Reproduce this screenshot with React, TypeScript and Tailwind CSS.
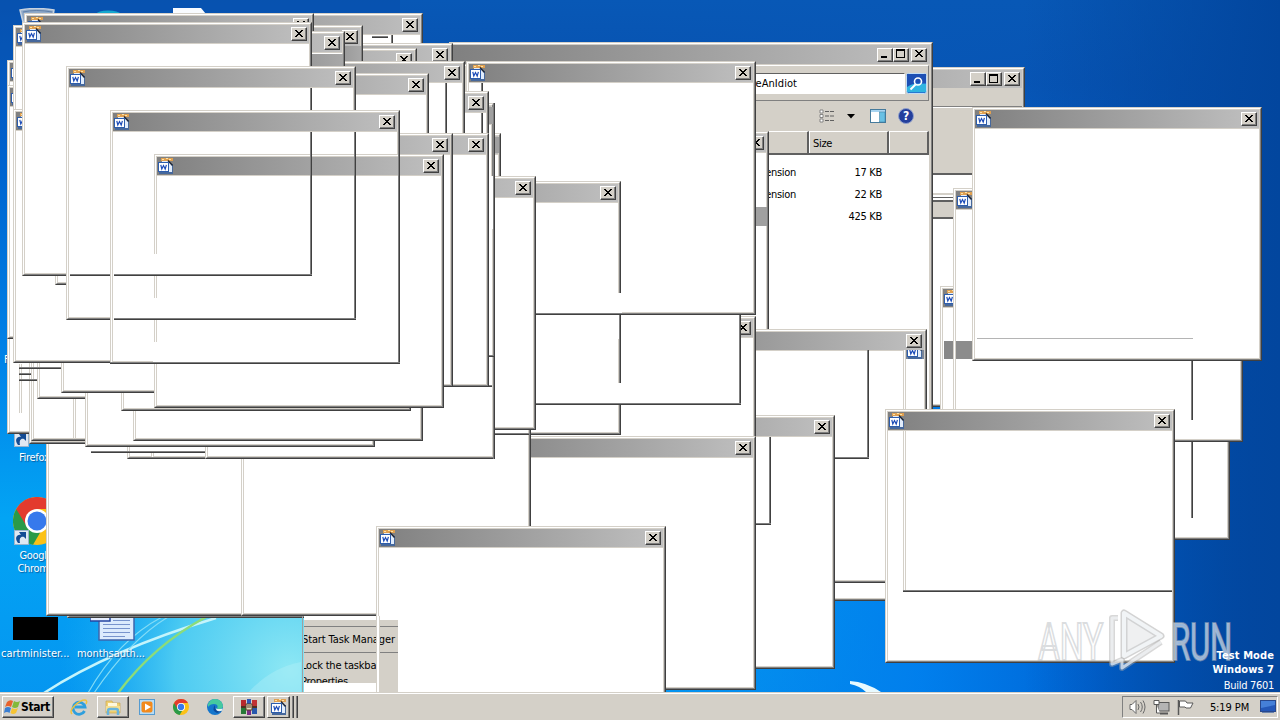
import type { ReactNode } from 'react';

interface Point {
  x: number;
  y: number;
}

type TraceKind = 'right' | 'bottom' | 'left' | 'top' | 'blank' | 'bar' | 'face';

interface TraceItem extends Point {
  kind: TraceKind;
  size: number;
  h?: number;
}

const POPUPS_BACK: Point[] = [
  { x: 940, y: 286 },
  { x: 953, y: 188 },
];

const POPUPS_RIGHT: Point[] = [
  { x: 972, y: 107 },
  { x: 479, y: 131 },
  { x: 637, y: 329 },
  { x: 545, y: 415 },
  { x: 885, y: 409 },
  { x: 466, y: 316 },
  { x: 466, y: 436 },
  { x: 466, y: 61 },
  { x: 331, y: 181 },
  { x: 67, y: 364 },
  { x: 46, y: 362 },
  { x: 241, y: 362 },
];

const POPUPS_LEFT: Point[] = [
  { x: 133, y: 13 },
  { x: 163, y: 43 },
  { x: 127, y: 48 },
  { x: 73, y: 25 },
  { x: 211, y: 133 },
  { x: 204, y: 103 },
  { x: 246, y: 176 },
  { x: 127, y: 205 },
  { x: 205, y: 205 },
  { x: 199, y: 91 },
  { x: 175, y: 61 },
  { x: 139, y: 73 },
  { x: 199, y: 133 },
  { x: 163, y: 133 },
  { x: 7, y: 60 },
  { x: 7, y: 180 },
  { x: 29, y: 190 },
  { x: 31, y: 187 },
  { x: 37, y: 145 },
  { x: 85, y: 193 },
  { x: 133, y: 187 },
  { x: 121, y: 157 },
  { x: 61, y: 139 },
  { x: 7, y: 85 },
  { x: 13, y: 25 },
  { x: 13, y: 109 },
  { x: 24, y: 13 },
  { x: 55, y: 31 },
  { x: 22, y: 22 },
  { x: 66, y: 66 },
  { x: 110, y: 110 },
  { x: 154, y: 154 },
];

// Edges left behind by windows that never repainted
const TRACES_RIGHT: TraceItem[] = [
  { kind: 'blank', x: 618, y: 293, size: 4, h: 20 },
  { kind: 'bottom', x: 534, y: 313, size: 220 },
  { kind: 'blank', x: 500, y: 315, size: 239, h: 24 },
  { kind: 'right', x: 619, y: 315, size: 68 },
  { kind: 'right', x: 739, y: 315, size: 90 },
  { kind: 'blank', x: 618, y: 383, size: 4, h: 20 },
  { kind: 'bottom', x: 534, y: 403, size: 207 },
  { kind: 'right', x: 867, y: 350, size: 109 },
  { kind: 'bottom', x: 835, y: 457, size: 34 },
  { kind: 'right', x: 769, y: 437, size: 88 },
  { kind: 'bottom', x: 756, y: 523, size: 15 },
  { kind: 'bar', x: 756, y: 207, size: 11, h: 19 },
  { kind: 'left', x: 903, y: 350, size: 59 },
  { kind: 'left', x: 903, y: 431, size: 160 },
  { kind: 'bottom', x: 903, y: 590, size: 269 },
  { kind: 'top', x: 977, y: 338, size: 216 },
  { kind: 'right', x: 1191, y: 361, size: 59 },
  { kind: 'right', x: 1191, y: 442, size: 76 },
];

const TRACES_LEFT: TraceItem[] = [
  { kind: 'face', x: 312, y: 54, size: 31, h: 12 },
  { kind: 'face', x: 345, y: 46, size: 16, h: 15 },
  { kind: 'blank', x: 489, y: 176, size: 4, h: 53 },
  { kind: 'bar', x: 489, y: 107, size: 4, h: 17 },
  { kind: 'bar', x: 495, y: 137, size: 4, h: 16 },
  { kind: 'right', x: 493, y: 103, size: 356 },
  { kind: 'right', x: 310, y: 88, size: 22 },
  { kind: 'right', x: 310, y: 132, size: 144 },
  { kind: 'bottom', x: 70, y: 274, size: 40 },
  { kind: 'bottom', x: 114, y: 274, size: 198 },
  { kind: 'right', x: 354, y: 132, size: 188 },
  { kind: 'bottom', x: 114, y: 318, size: 242 },
  { kind: 'right', x: 398, y: 154, size: 210 },
  { kind: 'bottom', x: 110, y: 362, size: 290 },
  { kind: 'blank', x: 153, y: 254, size: 5, h: 20 },
  { kind: 'blank', x: 153, y: 298, size: 5, h: 20 },
  { kind: 'blank', x: 153, y: 342, size: 5, h: 20 },
  { kind: 'right', x: 445, y: 83, size: 50 },
  { kind: 'right', x: 481, y: 83, size: 8 },
  { kind: 'right', x: 481, y: 113, size: 20 },
  { kind: 'bottom', x: 372, y: 36, size: 16 },
  { kind: 'right', x: 391, y: 35, size: 8 },
  { kind: 'bottom', x: 489, y: 355, size: 5 },
  { kind: 'bottom', x: 489, y: 385, size: 3 },
  { kind: 'bottom', x: 495, y: 433, size: 34 },
  { kind: 'left', x: 73, y: 399, size: 39 },
  { kind: 'left', x: 19, y: 364, size: 49 },
  { kind: 'bottom', x: 19, y: 367, size: 42 },
  { kind: 'bottom', x: 19, y: 373, size: 12 },
  { kind: 'bottom', x: 19, y: 379, size: 18 },
  { kind: 'bottom', x: 91, y: 451, size: 114 },
  { kind: 'left', x: 151, y: 453, size: 4 },
];

function WordIcon() {
  return (
    <svg width="16" height="16" viewBox="0 0 16 16" className="shrink-0">
      <path d="M3 6h12v10H1v-3z" fill="#46689c" />
      <path d="M3 0h12v3H3z" fill="#e0a050" />
      <path d="M4 1.500h2M8 0.500h2M11 1.500h2" stroke="#fbe3a8" />
      <path d="M4 3h7l3 4v7H4z" fill="#e2edfc" />
      <path d="M10 2.500l4.500 5" stroke="#1c2434" strokeWidth="1.400" />
      <rect x="0.500" y="4.500" width="10" height="9" fill="#fff" stroke="#2d5dac" />
      <path d="M2.800 6.800l1 4.200 1.700-3.500 1.700 3.500 1.200-4.200" fill="none" stroke="#1b4bb8" strokeWidth="1.200" />
    </svg>
  );
}

function CaptionButton({ children }: { children: ReactNode }) {
  return (
    <span className="block h-[14px] w-[16px] shrink-0 border border-t-white border-l-white border-r-[#404040] border-b-[#404040] bg-[#d4d0c8]">
      <span className="flex h-full w-full items-center justify-center border-r border-b border-[#808080]">
        <svg width="12" height="10" viewBox="0 0 12 10" shapeRendering="crispEdges">{children}</svg>
      </span>
    </span>
  );
}

function CloseButton() {
  return (
    <CaptionButton>
      <path
        d="M2 1h2v1H2zM8 1h2v1H8zM3 2h2v1H3zM7 2h2v1H7zM4 3h4v1H4zM5 4h2v1H5zM4 5h4v1H4zM3 6h2v1H3zM7 6h2v1H7zM2 7h2v1H2zM8 7h2v1H8z"
        fill="#000"
      />
    </CaptionButton>
  );
}

function WindowControls() {
  return (
    <span className="flex">
      <CaptionButton><path d="M2 7h6v2H2z" fill="#000" /></CaptionButton>
      <CaptionButton><path d="M1 0h9v9H1zM2 2v6h7V2z" fillRule="evenodd" fill="#000" /></CaptionButton>
      <span className="w-[2px]" />
      <CloseButton />
    </span>
  );
}

function Frame({ children }: { children: ReactNode }) {
  return (
    <div className="h-full w-full border border-t-[#d4d0c8] border-l-[#d4d0c8] border-r-[#404040] border-b-[#404040]">
      <div className="flex h-full w-full flex-col border border-t-white border-l-white border-r-[#808080] border-b-[#808080] bg-[#d4d0c8] p-px">
        {children}
      </div>
    </div>
  );
}

function Popup({ x, y }: Point) {
  return (
    <div className="absolute h-[254px] w-[290px]" style={{ left: x, top: y }}>
      <Frame>
        <div className="flex h-[18px] shrink-0 items-center justify-between bg-gradient-to-r from-[#808080] to-[#c0c0c0] pr-[2px] pl-px">
          <WordIcon />
          <CloseButton />
        </div>
        <div className="mt-px flex-1 bg-white" />
      </Frame>
    </div>
  );
}

function Trace({ kind, x, y, size, h }: TraceItem) {
  const pos = { left: x, top: y };
  if (kind === 'right') {
    return <div className="absolute w-[2px] border-r border-[#404040] bg-[#808080]" style={{ ...pos, height: size }} />;
  }
  if (kind === 'bottom') {
    return <div className="absolute h-[2px] border-b border-[#404040] bg-[#808080]" style={{ ...pos, width: size }} />;
  }
  if (kind === 'left') {
    return <div className="absolute w-[3px] border-x border-[#d4d0c8] bg-white" style={{ ...pos, height: size }} />;
  }
  if (kind === 'top') {
    return <div className="absolute h-px bg-[#b4b4b4]" style={{ ...pos, width: size }} />;
  }
  if (kind === 'bar') {
    return <div className="absolute bg-[#a0a0a0]" style={{ ...pos, width: size, height: h }} />;
  }
  if (kind === 'face') {
    return <div className="absolute bg-gradient-to-r from-[#9c9c9c] to-[#a8a8a8]" style={{ ...pos, width: size, height: h }} />;
  }
  return <div className="absolute bg-white" style={{ ...pos, width: size, height: h }} />;
}

function ChromeIcon({ size }: { size: number }) {
  return (
    <svg width={size} height={size} viewBox="0 0 48 48">
      <circle cx="24" cy="24" r="24" fill="#fbc116" />
      <path d="M24 24L3.200 12A24 24 0 0 0 20 47.700L31 29z" fill="#2a9a48" />
      <path d="M3.200 12A24 24 0 0 1 44.800 12H24L14 30z" fill="#e33b2e" />
      <circle cx="24" cy="24" r="12" fill="#fff" />
      <circle cx="24" cy="24" r="9.500" fill="#3779ec" />
    </svg>
  );
}

function ShortcutArrow() {
  return (
    <svg width="15" height="15" viewBox="0 0 15 15">
      <rect x="0.500" y="0.500" width="14" height="14" fill="#dfe8f2" stroke="#9ab4cc" />
      <path d="M4 13C0 8 3 4 7 5L5 2h7v7l-2-2c-3-1-5 1-4 6z" fill="#134b94" />
    </svg>
  );
}

function Wallpaper() {
  return (
    <svg className="absolute inset-0" width="1280" height="720" viewBox="0 0 1280 720">
      <defs>
        <linearGradient id="sky" x1="0" y1="0" x2="0" y2="1">
          <stop offset="0" stopColor="#0850ae" />
          <stop offset="0.200" stopColor="#0060cc" />
          <stop offset="0.500" stopColor="#0083e8" />
          <stop offset="0.720" stopColor="#03a4f4" />
          <stop offset="1" stopColor="#0594f0" />
        </linearGradient>
        <linearGradient id="shade" x1="0" y1="0" x2="1" y2="0">
          <stop offset="0.500" stopColor="#0078e8" stopOpacity="0" />
          <stop offset="0.720" stopColor="#007cec" stopOpacity="0.900" />
          <stop offset="0.850" stopColor="#0066d6" />
          <stop offset="0.930" stopColor="#0058be" />
          <stop offset="1" stopColor="#024ca6" />
        </linearGradient>
        <linearGradient id="top" x1="0" y1="0" x2="0" y2="1">
          <stop offset="0" stopColor="#0858b6" />
          <stop offset="0.200" stopColor="#0852b0" stopOpacity="0.900" />
          <stop offset="1" stopColor="#0650ae" stopOpacity="0" />
        </linearGradient>
        <linearGradient id="corner" x1="0" y1="0" x2="1" y2="0">
          <stop offset="0.800" stopColor="#02469e" stopOpacity="0" />
          <stop offset="1" stopColor="#02469e" />
        </linearGradient>
        <radialGradient id="glow" cx="290" cy="670" r="230" gradientUnits="userSpaceOnUse">
          <stop offset="0" stopColor="#8ee8f4" />
          <stop offset="0.500" stopColor="#5ad4f2" stopOpacity="0.850" />
          <stop offset="1" stopColor="#20b4f4" stopOpacity="0" />
        </radialGradient>
      </defs>
      <rect width="1280" height="720" fill="url(#sky)" />
      <rect width="1280" height="720" fill="url(#shade)" />
      <rect x="400" width="880" height="420" fill="url(#top)" />
      <rect width="400" height="60" fill="#0855b2" opacity="0.400" />
      <rect width="1280" height="720" fill="url(#corner)" />
      <rect y="400" width="700" height="320" fill="url(#glow)" />
      <path d="M44 693Q110 650 216 618" stroke="#c4f4fb" strokeWidth="2.500" fill="none" />
      <path d="M88 693Q118 640 162 617M94 693Q130 640 168 617" stroke="#83dcf6" strokeWidth="1.200" fill="none" />
      <path d="M118 693Q154 645 206 617" stroke="#8cdc79" strokeWidth="2.500" fill="none" />
      <path d="M248 693Q270 668 301 662V693z" fill="#b4f0f8" opacity="0.400" />
      <path d="M850 681Q866 682 881 692H866Q860 686 850 684z" fill="#e8faff" />
    </svg>
  );
}

function DesktopLabel({ children }: { children: ReactNode }) {
  return <p className="text-center text-[11px] leading-[13px] whitespace-nowrap text-white [text-shadow:1px_1px_1px_#0a5a9c]">{children}</p>;
}

function DesktopIcons() {
  return (
    <>
      <svg className="absolute top-[8px] left-[18px]" width="190" height="14" viewBox="0 0 190 14">
        <path d="M2 2Q18 -1 36 2L34 14H5z" fill="#8fa9c8" stroke="#c7d2de" strokeWidth="1.500" />
        <path d="M5 4Q18 1 34 4" stroke="#5f7fa8" fill="none" />
        <path d="M78 6Q80 2.500 90 2.500T103 6z" fill="#16a8ce" />
        <path d="M155 0h28l5 6h-33z" fill="#f8fbff" />
      </svg>
      <div className="absolute top-[353px] left-[4px]"><DesktopLabel>F</DesktopLabel></div>
      <div className="absolute top-[432px] left-[14px]"><ShortcutArrow /></div>
      <div className="absolute top-[451px] left-[19px]"><DesktopLabel>Firefox</DesktopLabel></div>
      <div className="absolute top-[497px] left-[13px]"><ChromeIcon size={48} /></div>
      <div className="absolute top-[530px] left-[14px]"><ShortcutArrow /></div>
      <div className="absolute top-[549px] left-[15px] w-[42px]">
        <DesktopLabel>Google<br />Chrome</DesktopLabel>
      </div>
      <div className="absolute top-[617px] left-[13px] h-[23px] w-[45px] bg-black" />
      <div className="absolute top-[647px] left-[1px] tracking-[0px]"><DesktopLabel>cartminister...</DesktopLabel></div>
      <svg className="absolute top-[616px] left-[90px]" width="46" height="26" viewBox="0 0 46 26">
        <path d="M9 0h35v24H9z" fill="#dcebfd" stroke="#3c66ad" strokeWidth="1.500" />
        <path d="M0 0h20v5H0z" fill="#e7efff" stroke="#2445a2" strokeWidth="1.500" />
        <path d="M23 4.500h17M13 8.500h27M13 12.500h27M13 16.500h27M13 20.500h22" stroke="#7894cd" />
      </svg>
      <div className="absolute top-[647px] left-[77px] tracking-[-0.100px]"><DesktopLabel>monthsauth...</DesktopLabel></div>
    </>
  );
}

function BackExplorer() {
  return (
    <div className="absolute top-[67px] left-[600px] h-[340px] w-[425px]">
      <Frame>
        <div className="flex h-[18px] shrink-0 items-center justify-end bg-gradient-to-r from-[#808080] to-[#c0c0c0] pr-[2px]">
          <WindowControls />
        </div>
        <div className="mt-[18px] h-[69px] shrink-0 border-t border-b-2 border-t-[#808080] border-b-[#606060] shadow-[inset_0_1px_white]" />
        <div className="h-[18px] shrink-0 bg-white" />
        <div className="h-[9px] shrink-0 border-t-2 border-b-2 border-t-[#d4d0c8] border-b-[#606060] bg-white pt-[2px]">
          <div className="h-px bg-[#606060]" />
        </div>
        <div className="h-[17px] shrink-0 border-b-2 border-[#606060]" />
        <div className="flex-1 bg-white" />
      </Frame>
    </div>
  );
}

function ExplorerRow({ type, size }: { type: string; size: string }) {
  return (
    <div className="flex h-[22px] items-center text-right">
      <span className="flex-1">{type}</span>
      <span className="w-[86px]">{size}</span>
      <span className="w-[47px]" />
    </div>
  );
}

function ExplorerWindow() {
  return (
    <div className="absolute top-[42px] left-[449px] h-[559px] w-[484px] text-[11px] text-black">
      <Frame>
        <div className="flex h-[19px] shrink-0 items-center justify-end bg-gradient-to-r from-[#808080] to-[#c0c0c0] pr-[3px]">
          <WindowControls />
        </div>
        <div className="mt-px mr-px flex h-[36px] shrink-0 items-center justify-end border border-t-white border-l-white border-r-[#808080] border-b-[#808080] pr-[1px]">
          <div className="flex h-[21px] w-[300px] items-center justify-end border border-t-[#606060] border-l-[#606060] border-r-white border-b-white bg-white pr-[107px] tracking-[0.050px]">
            Search YouAreAnIdiot
          </div>
          <svg className="ml-px" width="21" height="21" viewBox="0 0 21 21">
            <rect x="0.500" y="0.500" width="20" height="20" rx="2" fill="#2878d0" stroke="#c0dcf4" />
            <path d="M1 11h19v8H1z" fill="#30b4e0" />
            <path d="M1 1h19v9Q9 9 1 14z" fill="#1d4fb4" />
            <circle cx="12" cy="8.500" r="3.500" fill="none" stroke="#fff" strokeWidth="1.600" />
            <path d="M9.500 11.500l-5 5" stroke="#fff" strokeWidth="2" />
          </svg>
        </div>
        <div className="mr-px flex h-[30px] shrink-0 items-center justify-end pr-[15px]">
          <svg width="16" height="14" viewBox="0 0 16 14" className="mr-[12px]">
            <path d="M1 1h3v3H1zM1 5.500h3v3H1zM1 10h3v3H1z" fill="#fff" stroke="#707070" strokeWidth="0.800" />
            <path d="M6 2.500h10M6 7h10M6 11.500h10" stroke="#606060" strokeDasharray="4 1" />
          </svg>
          <svg width="8" height="5" viewBox="0 0 8 5" className="mr-[15px]"><path d="M0 0h8L4 4.500z" fill="#000" /></svg>
          <svg width="16" height="14" viewBox="0 0 16 14" className="mr-[12px]">
            <rect x="0.500" y="0.500" width="15" height="13" fill="#fff" stroke="#457a9c" />
            <path d="M1 1h14v2H1z" fill="#a8d4f0" />
            <rect x="9.500" y="3" width="5.500" height="10" fill="#68c0e4" stroke="#38789c" strokeWidth="0.500" />
          </svg>
          <span className="flex h-[16px] w-[16px] items-center justify-center rounded-full border border-[#90a0cc] bg-[#243f9c] text-[12px] font-bold text-white">?</span>
        </div>
        <div className="mr-px flex h-[24px] shrink-0 justify-end border-b-2 border-[#606060]">
          <span className="flex-1 border-t border-r-2 border-t-white border-r-[#606060]" />
          <span className="flex w-[80px] items-center border-t border-r-2 border-l border-t-white border-l-white border-r-[#606060] pt-[2px] pl-[3px]">Size</span>
          <span className="w-[40px] border-t border-r-2 border-l border-t-white border-l-white border-r-[#606060]" />
        </div>
        <div className="mr-px flex-1 bg-white pt-[6px]">
          <ExplorerRow type="Application extension" size="17 KB" />
          <ExplorerRow type="Application extension" size="22 KB" />
          <ExplorerRow type="" size="425 KB" />
        </div>
      </Frame>
    </div>
  );
}

function TaskbarMenu() {
  return (
    <div className="absolute top-[616px] left-[302px] h-[76px] w-[96px] border-l border-[#a0a0a0] pl-px text-[11px] text-black">
      <div className="h-[4px] w-[73px] bg-white" />
      <div className="h-[7px] border-b border-[#808080] bg-[#d4d0c8]" />
      <div className="flex h-[26px] items-center overflow-hidden border-b border-[#808080] bg-[#d4d0c8] whitespace-nowrap">
        <span className="-ml-[2px] tracking-[-0.120px]">Start Task Manager</span>
      </div>
      <div className="flex h-[39px]">
        <div className="w-[73px] bg-white">
          <div className="flex h-[24px] items-center overflow-hidden bg-[#d4d0c8] whitespace-nowrap">
            <span className="-ml-[3px] tracking-[-0.200px]">Lock the taskbar</span>
          </div>
          <div className="h-[6px] overflow-hidden bg-[#d4d0c8] leading-[10px]"><span className="-ml-[3px]">Properties</span></div>
        </div>
        <div className="flex-1 bg-[#d4d0c8]" />
      </div>
      <div className="absolute top-0 left-[73px] h-[76px] w-[4px] border-r border-l border-[#d4d0c8] bg-white" />
    </div>
  );
}

function Watermark() {
  return (
    <svg className="absolute top-[600px] left-[1030px]" width="210" height="76" viewBox="0 0 210 76">
      <g fontFamily="Roboto, sans-serif" fontSize="52" fill="#ffffff" fillOpacity="0.600" stroke="#b8bcc0" strokeOpacity="0.500" strokeWidth="2.200">
        <text x="8" y="60" textLength="65" lengthAdjust="spacingAndGlyphs">ANY</text>
        <text x="141" y="60" textLength="61" lengthAdjust="spacingAndGlyphs">RUN</text>
      </g>
      <g fill="none" strokeLinejoin="round">
        <path d="M94 13V56L131 36z" stroke="#a8a8a8" strokeOpacity="0.500" strokeWidth="7" />
        <path d="M88 18H82V64L92 60V68L131 42" stroke="#a8a8a8" strokeOpacity="0.450" strokeWidth="6" />
        <path d="M94 13V56L131 36z" fill="#d0d4d8" fillOpacity="0.350" stroke="#f4f7fa" strokeOpacity="0.900" strokeWidth="4" />
        <path d="M88 18H82V64L92 60V68L131 42" stroke="#f4f7fa" strokeOpacity="0.700" strokeWidth="3" />
      </g>
    </svg>
  );
}

function TaskButton({ children }: { children: ReactNode }) {
  return (
    <div className="flex h-[22px] w-[32px] items-center justify-center border border-t-white border-l-white border-r-[#404040] border-b-[#404040] shadow-[inset_-1px_-1px_#808080]">
      {children}
    </div>
  );
}

function Taskbar() {
  return (
    <div className="absolute bottom-0 left-0 flex h-[28px] w-[1280px] items-center border-t border-[#d4d0c8] bg-[#d4d0c8] px-[2px] pt-px text-[11px] text-black shadow-[inset_0_1px_white]">
      <div className="flex h-[22px] w-[52px] items-center border border-t-white border-l-white border-r-[#404040] border-b-[#404040] shadow-[inset_-1px_-1px_#808080]">
        <svg width="17" height="16" viewBox="0 0 17 16" className="ml-px">
          <path d="M3 3q3-3 6-1L7 8Q4 6 1 8z" fill="#e8622c" />
          <path d="M10 2q3 2 6 0l-2 6q-3 2-6 0z" fill="#83b93a" />
          <path d="M1 9q3-2 6 0l-1.500 5Q3 12 0 14z" fill="#3b7fd2" />
          <path d="M8 9q3 2 6 0l-2 5q-3 2-5.500 0z" fill="#f6c433" />
        </svg>
        <span className="text-[12px] font-bold tracking-[-0.400px]">Start</span>
      </div>
      <div className="ml-[17px] flex w-[16px] justify-center">
        <svg width="18" height="17" viewBox="0 0 18 17" className="shrink-0">
          <path d="M14.500 12a6 6 0 1 1 .5-4H5" fill="none" stroke="#2f9fdd" strokeWidth="2.800" />
          <path d="M2 15C-2 11 9 1 15 1c2 0 2 2 1 4" fill="none" stroke="#eec23e" strokeWidth="1.500" />
        </svg>
      </div>
      <div className="ml-[10px]">
        <TaskButton>
          <svg width="18" height="17" viewBox="0 0 18 17">
            <path d="M2 2h6l1 2h7v10H2z" fill="#f0d070" stroke="#c8a850" strokeWidth="0.700" />
            <path d="M4 4h9v5H4z" fill="#fff8dc" />
            <path d="M2 7h14v5H2z" fill="#f5df92" />
            <path d="M4 16v-4q0-2 2-2h6q2 0 2 2v4" fill="none" stroke="#69b4dc" strokeWidth="2.500" />
          </svg>
        </TaskButton>
      </div>
      <svg width="16" height="16" viewBox="0 0 16 16" className="ml-[10px]">
        <rect x="0.500" y="0.500" width="15" height="15" fill="#b8dcf4" stroke="#559bd0" />
        <rect x="2.500" y="2.500" width="11" height="11" rx="2" fill="#f28a1c" />
        <path d="M6 4.500v7l6-3.500z" fill="#fff" />
      </svg>
      <div className="ml-[18px]"><ChromeIcon size={16} /></div>
      <svg width="16" height="16" viewBox="0 0 16 16" className="ml-[18px]">
        <circle cx="8" cy="8" r="8" fill="#1476cc" />
        <path d="M1 5Q4-1 10 .3 16 2 16 8q-2 3-6 2 2-5-3-5-4 0-6 3z" fill="#45c9a0" />
        <path d="M8 6q-4 5 2 8l5-2Q8 13 8 8z" fill="#0b4a9c" />
        <path d="M8.500 8q0 3 7 1.500v2Q9 14 8.500 8z" fill="#e6f2f4" />
      </svg>
      <div className="ml-[10px]">
        <TaskButton>
          <svg width="16" height="16" viewBox="0 0 16 16">
            <path d="M0 1h5v6H0z" fill="#b8282c" />
            <path d="M6 0h4v7H6z" fill="#3058b8" />
            <path d="M11 1h5v6h-5z" fill="#c03034" />
            <path d="M0 9h5v6H0z" fill="#277838" />
            <path d="M6 9h4v7H6z" fill="#7b2c87" />
            <path d="M11 9h5v6h-5z" fill="#2858ac" />
            <path d="M0 7h16v2H0z" fill="#503020" />
            <path d="M5 5h6v6H5z" fill="#eadfc0" stroke="#593c28" />
            <path d="M7 6v3M9 6v3" stroke="#593c28" />
          </svg>
        </TaskButton>
      </div>
      <div className="ml-[2px] flex">
        <div className="flex h-[22px] w-[23px] items-center justify-center border border-t-white border-l-white border-r-[#404040] border-b-[#404040] shadow-[inset_-1px_0_#808080]">
          <WordIcon />
        </div>
        <span className="ml-[2px] h-[22px] w-[2px] border-r border-[#404040] bg-[#808080]" />
        <span className="ml-[2px] h-[22px] w-[2px] border-r border-[#404040] bg-[#808080]" />
      </div>
      <div className="ml-auto flex h-[22px] w-[156px] items-center border border-t-[#808080] border-l-[#808080] border-r-white border-b-white pl-[6px]">
        <svg width="17" height="16" viewBox="0 0 17 16" fill="#fff" stroke="#686868">
          <path d="M1 5.500h2l4-4v13l-4-4H1z" />
          <path d="M9 5q2 3 0 6M11.500 3q3.500 5 0 10M14 1.500q4 6.500 0 13" fill="none" />
        </svg>
        <svg width="18" height="16" viewBox="0 0 18 16" fill="#fff" stroke="#585858" className="ml-[7px]">
          <rect x="5" y="3.500" width="11" height="8.500" fill="#b4b4b4" />
          <path d="M1 1.500h5v4H1zM3.500 6v8H7" />
          <path d="M7 14.500h8" strokeWidth="2" />
        </svg>
        <svg width="17" height="16" viewBox="0 0 17 16" fill="#fff" stroke="#585858" className="ml-[6px]">
          <path d="M1.500 1v15" strokeWidth="1.500" />
          <path d="M2.500 2h6l1.500 2h6l-2.500 5H9L8 8H2.500z" />
        </svg>
        <span className="ml-[15px] w-[41px] text-center tracking-[-0.100px] whitespace-nowrap">5:19 PM</span>
        <svg width="16" height="14" viewBox="0 0 16 14" className="ml-[10px]">
          <rect x="0.500" y="0.500" width="15" height="11" fill="#2458b8" stroke="#28488c" />
          <path d="M1 1h14v4L1 8z" fill="#4580d8" />
          <path d="M2 12.500h12" stroke="#6a83ac" />
        </svg>
      </div>
    </div>
  );
}

export default function App() {
  return (
    <main className="relative h-[720px] w-[1280px] overflow-hidden bg-[#0068d0] font-['Tahoma','DejaVu_Sans_Condensed','DejaVu_Sans',sans-serif] leading-[13px] tracking-[-0.300px]">
      <Wallpaper />
      <DesktopIcons />
      <BackExplorer />
      <ExplorerWindow />

      {POPUPS_BACK.map((p) => <Popup key={`${p.x}-${p.y}`} {...p} />)}
      <div className="absolute top-[341px] left-[944px] flex gap-[3px]">
        <span className="h-[18px] w-[9px] bg-[#888888]" />
        <span className="h-[18px] w-[16px] bg-[#8c8c8c]" />
      </div>

      {POPUPS_RIGHT.map((p) => <Popup key={`${p.x}-${p.y}`} {...p} />)}
      {TRACES_RIGHT.map((t, i) => <Trace key={i} {...t} />)}
      <div className="absolute top-[350px] left-[906px] flex h-[9px] w-[18px] items-end overflow-hidden bg-[#7c8798] pl-px">
        <WordIcon />
      </div>

      {POPUPS_LEFT.map((p) => <Popup key={`${p.x}-${p.y}`} {...p} />)}
      {TRACES_LEFT.map((t, i) => <Trace key={i} {...t} />)}
      <Popup x={376} y={526} />
      <TaskbarMenu />

      <Watermark />
      <div className="absolute top-[649px] right-[6px] text-right text-[11px] leading-[14px] whitespace-nowrap text-white">
        <p className="font-bold tracking-[0.100px]">Test Mode</p>
        <p className="font-bold tracking-[0.100px]">Windows 7</p>
        <p className="mt-[2px]">Build 7601</p>
      </div>
      <Taskbar />
    </main>
  );
}
